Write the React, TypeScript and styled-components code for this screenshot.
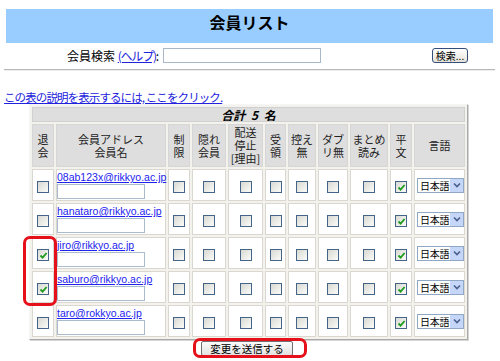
import styled, { createGlobalStyle } from 'styled-components';

type Member = {
  address: string;
  retire: boolean;
};

const members: Member[] = [
  { address: '08ab123x@rikkyo.ac.jp', retire: false },
  { address: 'hanataro@rikkyo.ac.jp', retire: false },
  { address: 'jiro@rikkyo.ac.jp', retire: true },
  { address: 'saburo@rikkyo.ac.jp', retire: true },
  { address: 'taro@rokkyo.ac.jp', retire: false },
];

const widths = [22, 110, 22, 34, 35, 21, 28, 30, 38, 22, 51];

const heads = [
  '退\n会',
  '会員アドレス\n会員名',
  '制\n限',
  '隠れ\n会員',
  '配送\n停止\n[理由]',
  '受\n領',
  '控え\n無',
  'ダブ\nリ無',
  'まとめ\n読み',
  '平\n文',
  '言語',
];

function CheckBox({ checked }: { checked?: boolean }) {
  return (
    <Box>
      {checked && (
        <svg width="9" height="9" viewBox="0 0 9 9">
          <path d="M1.5 4.5 L3.6 6.6 L7.6 2" fill="none" stroke="#1f9c1f" strokeWidth="1.8" />
        </svg>
      )}
    </Box>
  );
}

function LangSelect() {
  return (
    <Select>
      <SelectText>日本語</SelectText>
      <SelectArrow>
        <svg width="8" height="6" viewBox="0 0 8 6">
          <path d="M1 1.5 L4 4.5 L7 1.5" fill="none" stroke="#4a5f8c" strokeWidth="1.6" />
        </svg>
      </SelectArrow>
    </Select>
  );
}

export default function App() {
  return (
    <Page>
      <GlobalStyle />
      <TitleBar>
        <Title>会員リスト</Title>
      </TitleBar>
      <SearchRow>
        <SearchLabel>
          会員検索 <HelpRef href="#">(ヘルプ)</HelpRef>:
        </SearchLabel>
        <SearchInput type="text" />
        <XpButton>検索...</XpButton>
      </SearchRow>
      <Rule />
      <HelpLink href="#">この表の説明を表示するには, ここをクリック.</HelpLink>
      <Grid>
        <colgroup>
          {widths.map((w, i) => (
            <col key={i} style={{ width: w }} />
          ))}
        </colgroup>
        <tbody>
          <tr>
            <Caption colSpan={11}>合計 5 名</Caption>
          </tr>
          <tr>
            {heads.map((h) => (
              <HeadCell key={h}>{h}</HeadCell>
            ))}
          </tr>
          {members.map((m) => (
            <tr key={m.address}>
              <Cell>
                <CheckBox checked={m.retire} />
              </Cell>
              <AddressCell>
                <MailLink href="#">{m.address}</MailLink>
                <NameInput type="text" />
              </AddressCell>
              {[0, 1, 2, 3, 4, 5, 6].map((k) => (
                <Cell key={k}>
                  <CheckBox />
                </Cell>
              ))}
              <Cell>
                <CheckBox checked />
              </Cell>
              <Cell>
                <LangSelect />
              </Cell>
            </tr>
          ))}
        </tbody>
      </Grid>
      <Submit>
        <SubmitButton>変更を送信する</SubmitButton>
      </Submit>
      <Mark $left={23} $top={236} $width={34} $height={70} />
      <Mark $left={193} $top={338} $width={114} $height={20} />
    </Page>
  );
}

const GlobalStyle = createGlobalStyle`
  body {
    margin: 0;
    background: #ffffff;
    font-family: "Noto Sans CJK JP", "Liberation Sans", sans-serif;
  }
  * {
    box-sizing: border-box;
  }
`;

const Page = styled.div`
  position: relative;
  width: 500px;
  height: 361px;
  padding: 9px 4px 0 4px;
  overflow: hidden;
  font-size: 12px;
  color: #000;
`;

const TitleBar = styled.div`
  margin: 0 3px 0 2px;
  height: 34px;
  background: #99ccff;
  text-align: center;
`;

const Title = styled.h1`
  margin: 0;
  padding-top: 3px;
  font-size: 16px;
  line-height: 20px;
  font-weight: bold;
`;

const SearchRow = styled.div`
  display: flex;
  align-items: center;
  height: 17px;
  margin-top: 4px;
  padding-left: 63px;
  padding-right: 28px;
`;

const SearchLabel = styled.span`
  font-size: 12px;
  line-height: 15px;
  white-space: nowrap;
`;

const HelpRef = styled.a`
  color: #2222dd;
  text-decoration: underline;
  letter-spacing: -1.2px;
`;

const SearchInput = styled.input`
  width: 158px;
  height: 15px;
  margin-left: 4px;
  border: 1px solid #a8b8c8;
  padding: 0;
`;

const XpButton = styled.button`
  margin-left: auto;
  width: 36px;
  height: 15px;
  padding: 0;
  font-family: "Noto Sans CJK JP", sans-serif;
  font-size: 10px;
  line-height: 12px;
  color: #000;
  border: 1px solid #34507a;
  border-radius: 3px;
  background: linear-gradient(#ffffff, #e4e2d8);
`;

const Rule = styled.div`
  margin: 5px 1px 0 0;
  height: 2px;
  border-top: 1px solid #b8b8b8;
  border-bottom: 1px solid #eeeeee;
`;

const HelpLink = styled.a`
  display: block;
  margin-top: 19px;
  width: fit-content;
  font-size: 11.5px;
  line-height: 14px;
  letter-spacing: -0.9px;
  color: #2222dd;
  text-decoration: underline;
`;

const Grid = styled.table`
  width: 439px;
  margin: 0 0 0 25px;
  table-layout: fixed;
  border-collapse: separate;
  border-spacing: 2px;
  background: #f3f2ec;
  border: 1px solid;
  border-color: #f6f6f6 #a9a9a9 #a9a9a9 #f6f6f6;
  box-shadow: 1px 1px 0 #d6d6d6;
`;

const Caption = styled.td`
  height: 15px;
  padding: 0;
  background: #dedede;
  border: 1px solid #d0d0d0;
  text-align: center;
  font-size: 12px;
  line-height: 12px;
  font-style: italic;
  font-weight: bold;
  word-spacing: 3px;
`;

const HeadCell = styled.td`
  height: 43px;
  padding: 0;
  background: #dedede;
  border: 1px solid #d6d6d6;
  text-align: center;
  vertical-align: middle;
  white-space: pre-line;
  font-size: 11px;
  line-height: 13px;
  color: #222;
`;

const Cell = styled.td`
  height: 32px;
  padding: 0;
  background: #ffffff;
  border: 1px solid #d9d7cf;
  text-align: center;
  vertical-align: middle;
`;

const AddressCell = styled(Cell)`
  text-align: left;
  vertical-align: top;
  padding: 1px 0 0 0;
`;

const MailLink = styled.a`
  display: block;
  font-family: "Liberation Sans", Arial, sans-serif;
  font-size: 10.5px;
  line-height: 12px;
  color: #2222ee;
  text-decoration: underline;
  white-space: nowrap;
`;

const NameInput = styled.input`
  display: block;
  width: 88px;
  height: 15px;
  margin: 1px 0 0 0;
  padding: 0;
  border: 1px solid #a9bbcc;
`;

const Box = styled.span`
  display: inline-flex;
  align-items: center;
  justify-content: center;
  width: 12px;
  height: 12px;
  vertical-align: middle;
  border: 1px solid #45648a;
  background: linear-gradient(135deg, #d9d9d3, #fbfbf8);
`;

const Select = styled.div`
  display: flex;
  align-items: center;
  width: 47px;
  height: 15px;
  margin-left: 2px;
  border: 1px solid #8ea8c6;
  background: #ffffff;
`;

const SelectText = styled.span`
  flex: 1;
  padding-left: 2px;
  font-size: 10px;
  line-height: 13px;
  letter-spacing: -0.3px;
  text-align: left;
  white-space: nowrap;
  overflow: hidden;
`;

const SelectArrow = styled.span`
  display: flex;
  align-items: center;
  justify-content: center;
  flex: 0 0 13px;
  height: 13px;
  background: #c6d6f8;
`;

const Submit = styled.div`
  display: flex;
  justify-content: center;
  margin-top: 1px;
  padding-right: 6px;
`;

const SubmitButton = styled.button`
  width: 92px;
  height: 15px;
  padding: 0;
  font-family: "Noto Sans CJK JP", sans-serif;
  font-size: 10.5px;
  line-height: 12px;
  color: #000;
  border: 1px solid #707070;
  border-radius: 2px;
  background: linear-gradient(#fbfbfb, #e2e2e2);
`;

const Mark = styled.div<{ $left: number; $top: number; $width: number; $height: number }>`
  position: absolute;
  left: ${({ $left }) => $left}px;
  top: ${({ $top }) => $top}px;
  width: ${({ $width }) => $width}px;
  height: ${({ $height }) => $height}px;
  border: 3px solid #e5101a;
  border-radius: 7px;
  pointer-events: none;
`;
